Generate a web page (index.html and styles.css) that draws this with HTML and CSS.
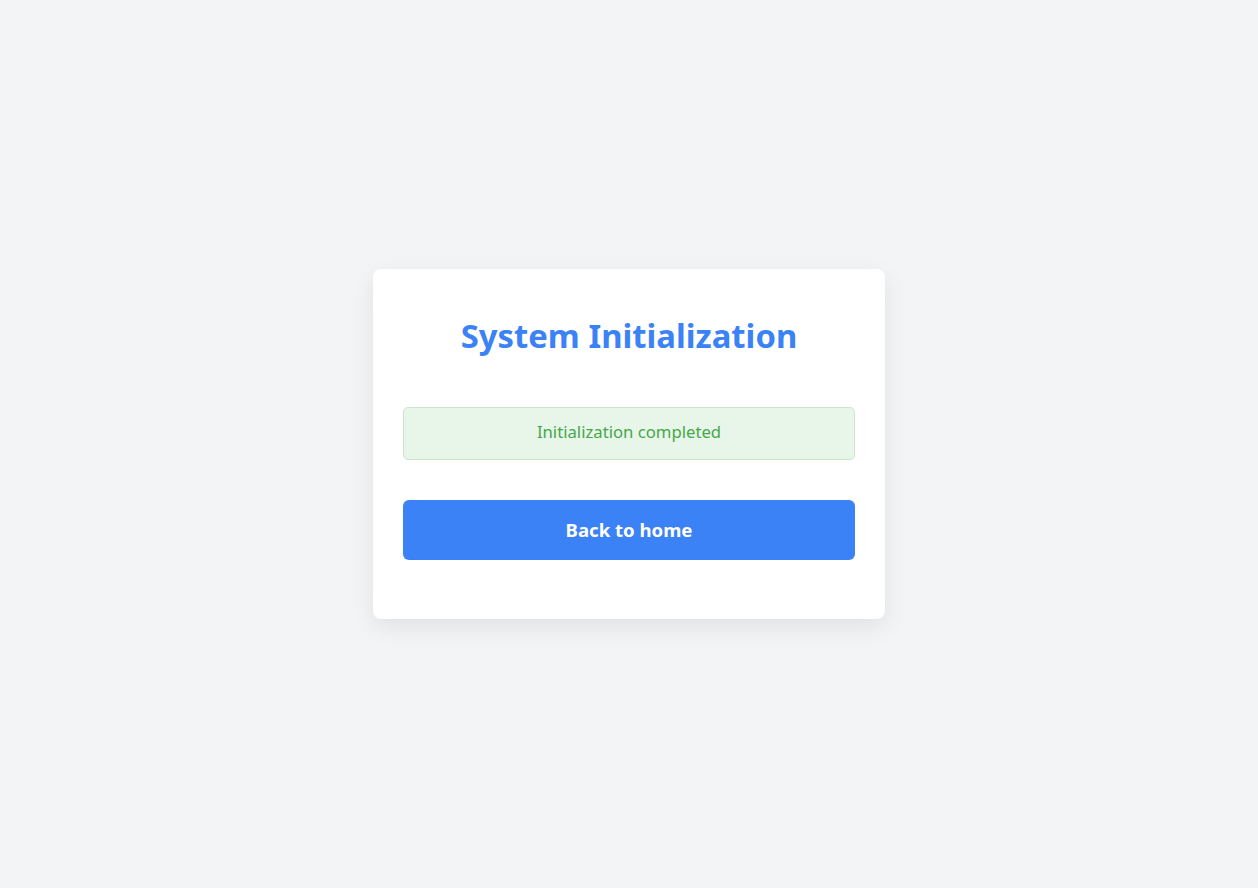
FILE: index.html
```html
<!DOCTYPE html>
<html lang="en">
<head>
<meta charset="utf-8">
<title>System Initialization</title>
<link rel="stylesheet" href="styles.css">
</head>
<body>
<main class="page">
  <section class="card">
    <h1 class="title">System Initialization</h1>
    <div class="status">Initialization completed</div>
    <button class="btn" type="button">Back to home</button>
  </section>
</main>
</body>
</html>
```
FILE: styles.css
```css
html, body {
  margin: 0;
  padding: 0;
}
body {
  background: #f3f4f6;
  font-family: "Noto Sans", "Open Sans", "DejaVu Sans", sans-serif;
}
.page {
  min-height: 888px;
  display: flex;
  align-items: center;
  justify-content: center;
}
.card {
  width: 512px;
  box-sizing: border-box;
  padding: 30px;
  background: #ffffff;
  border-radius: 8px;
  box-shadow: 0 8px 24px rgba(0, 0, 0, 0.08);
  display: flex;
  flex-direction: column;
}
.title {
  margin: 18px 0 52px;
  font-size: 32.8px;
  line-height: 38px;
  font-weight: 700;
  color: #3b82f6;
  text-align: center;
  letter-spacing: 0;
}
.status {
  height: 53px;
  box-sizing: border-box;
  border: 1px solid #c8e6c9;
  border-radius: 5px;
  background: #e8f5e9;
  color: #46a84a;
  font-size: 16.7px;
  display: flex;
  align-items: center;
  justify-content: center;
  padding-bottom: 4px;
}
.btn {
  margin: 40px 0 29px;
  height: 60px;
  padding: 0 0 2px;
  border: none;
  border-radius: 6px;
  background: #3b82f6;
  color: #ffffff;
  font-family: inherit;
  font-size: 18.6px;
  font-weight: 700;
  cursor: pointer;
}
```
